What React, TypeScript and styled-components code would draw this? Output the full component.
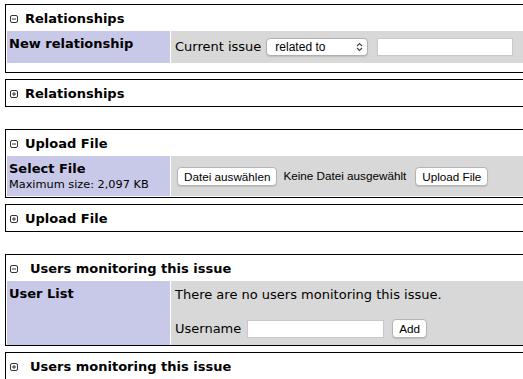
import React from "react";
import styled, { createGlobalStyle } from "styled-components";

const Global = createGlobalStyle`
  html, body { margin: 0; padding: 0; overflow: hidden; background: #fff; }
  body {
    font-family: "DejaVu Sans", Verdana, sans-serif;
    font-size: 13px;
    color: #000;
  }
`;

const Page = styled.div`
  padding: 4px 0 0 5px;
  width: 560px;
  display: flex;
  flex-direction: column;
  gap: 22px;
`;

const Section = styled.div`
  display: flex;
  flex-direction: column;
  gap: 6px;
`;

const Box = styled.div`
  border: 1px solid #000;
  padding: 1px;
  display: flex;
  flex-direction: column;
  gap: 1px;
  background: #fff;
`;

const Title = styled.div<{ $gap?: number }>`
  height: 24px;
  display: flex;
  align-items: center;
  padding-left: 3px;
  gap: ${(p) => p.$gap ?? 7}px;
  font-weight: bold;
  line-height: 16px;
  padding-top: 1px;
  box-sizing: border-box;
`;

const Row = styled.div<{ $h: number }>`
  display: grid;
  grid-template-columns: 163px 1fr;
  gap: 1px;
  height: ${(p) => p.$h}px;
`;

const Category = styled.div`
  background: #c8c8e8;
  padding: 5px 2px 3px;
  font-weight: bold;
  line-height: 16px;
  display: flex;
  flex-direction: column;
`;

const Small = styled.span`
  font-weight: normal;
  font-size: 11.3px;
  line-height: 13px;
  margin-top: 1px;
`;

const Value = styled.div<{ $col?: boolean }>`
  background: #d8d8d8;
  padding: ${(p) => (p.$col ? "6px 4px 7px" : "0 4px")};
  display: flex;
  flex-direction: ${(p) => (p.$col ? "column" : "row")};
  align-items: ${(p) => (p.$col ? "flex-start" : "center")};
  line-height: 16px;
`;

const Line = styled.div<{ $mt?: number }>`
  display: flex;
  align-items: center;
  margin-top: ${(p) => p.$mt ?? 0}px;
`;

const Spacer = styled.div`
  height: 7px;
`;

const SelectWrap = styled.span`
  position: relative;
  display: inline-flex;
  margin-left: 5px;
`;

const Select = styled.select`
  appearance: none;
  -webkit-appearance: none;
  width: 102px;
  height: 18px;
  box-sizing: border-box;
  border: 1px solid #b0b0b0;
  border-radius: 4px;
  background: #fff;
  font-family: "Liberation Sans", Arial, sans-serif;
  font-size: 12px;
  padding: 0 0 0 8px;
  color: #000;
  margin: 0;
  box-shadow: 0 1px 1px rgba(0, 0, 0, 0.12);
`;

const Chevron = styled.svg`
  position: absolute;
  right: 5px;
  top: 4px;
  pointer-events: none;
`;

const TextInput = styled.input<{ $w: number; $ml: number }>`
  width: ${(p) => p.$w}px;
  height: 18px;
  box-sizing: border-box;
  border: 1px solid #c8c8c8;
  background: #fff;
  margin: 0 0 0 ${(p) => p.$ml}px;
  padding: 0 3px;
  outline: none;
`;

const Button = styled.button<{ $ml: number }>`
  height: 19px;
  box-sizing: border-box;
  border: 1px solid #b4b4b4;
  border-radius: 4px;
  background: #fff;
  font-family: "Liberation Sans", Arial, sans-serif;
  font-size: 11.7px;
  padding: 0 6px;
  margin: 0 0 0 ${(p) => p.$ml}px;
  color: #000;
  line-height: 17px;
  box-shadow: 0 1px 1px rgba(0, 0, 0, 0.12);
`;

const SysText = styled.span<{ $ml: number }>`
  font-family: "Liberation Sans", Arial, sans-serif;
  font-size: 11.7px;
  margin-left: ${(p) => p.$ml}px;
`;

const Toggle = ({ open }: { open: boolean }) => (
  <svg width="8" height="8" viewBox="0 0 8 8" style={{ flex: "none" }}>
    <rect x="0.5" y="0.5" width="7" height="7" rx="1.5" fill="none" stroke="#333" strokeWidth="1" />
    <line x1="2" y1="4" x2="6" y2="4" stroke="#333" strokeWidth="1" />
    {!open && <line x1="4" y1="2" x2="4" y2="6" stroke="#333" strokeWidth="1" />}
  </svg>
);

export default function App() {
  return (
    <>
      <Global />
      <Page>
        <Section>
          <Box>
            <Title>
              <Toggle open />
              <span>Relationships</span>
            </Title>
            <Row $h={32}>
              <Category>New relationship</Category>
              <Value>
                <span>Current issue</span>
                <SelectWrap>
                  <Select defaultValue="related">
                    <option value="related">related to</option>
                  </Select>
                  <Chevron width="7" height="10" viewBox="0 0 7 10">
                    <path d="M1 4 L3.5 1.5 L6 4 M1 6 L3.5 8.5 L6 6" fill="none" stroke="#444" strokeWidth="1.1" />
                  </Chevron>
                </SelectWrap>
                <TextInput $w={136} $ml={9} />
              </Value>
            </Row>
            <Spacer />
          </Box>
          <Box>
            <Title>
              <Toggle open={false} />
              <span>Relationships</span>
            </Title>
          </Box>
        </Section>

        <Section>
          <Box>
            <Title>
              <Toggle open />
              <span>Upload File</span>
            </Title>
            <Row $h={40}>
              <Category>
                Select File
                <Small>Maximum size: 2,097 KB</Small>
              </Category>
              <Value>
                <Button $ml={2}>Datei auswählen</Button>
                <SysText $ml={6}>Keine Datei ausgewählt</SysText>
                <Button $ml={9}>Upload File</Button>
              </Value>
            </Row>
          </Box>
          <Box>
            <Title>
              <Toggle open={false} />
              <span>Upload File</span>
            </Title>
          </Box>
        </Section>

        <Section>
          <Box>
            <Title $gap={12}>
              <Toggle open />
              <span>Users monitoring this issue</span>
            </Title>
            <Row $h={63}>
              <Category>User List</Category>
              <Value $col>
                <span>There are no users monitoring this issue.</span>
                <Line $mt={16}>
                  <span>Username</span>
                  <TextInput $w={137} $ml={6} />
                  <Button $ml={8}>Add</Button>
                </Line>
              </Value>
            </Row>
          </Box>
          <Box>
            <Title $gap={12}>
              <Toggle open={false} />
              <span>Users monitoring this issue</span>
            </Title>
          </Box>
        </Section>
      </Page>
    </>
  );
}
